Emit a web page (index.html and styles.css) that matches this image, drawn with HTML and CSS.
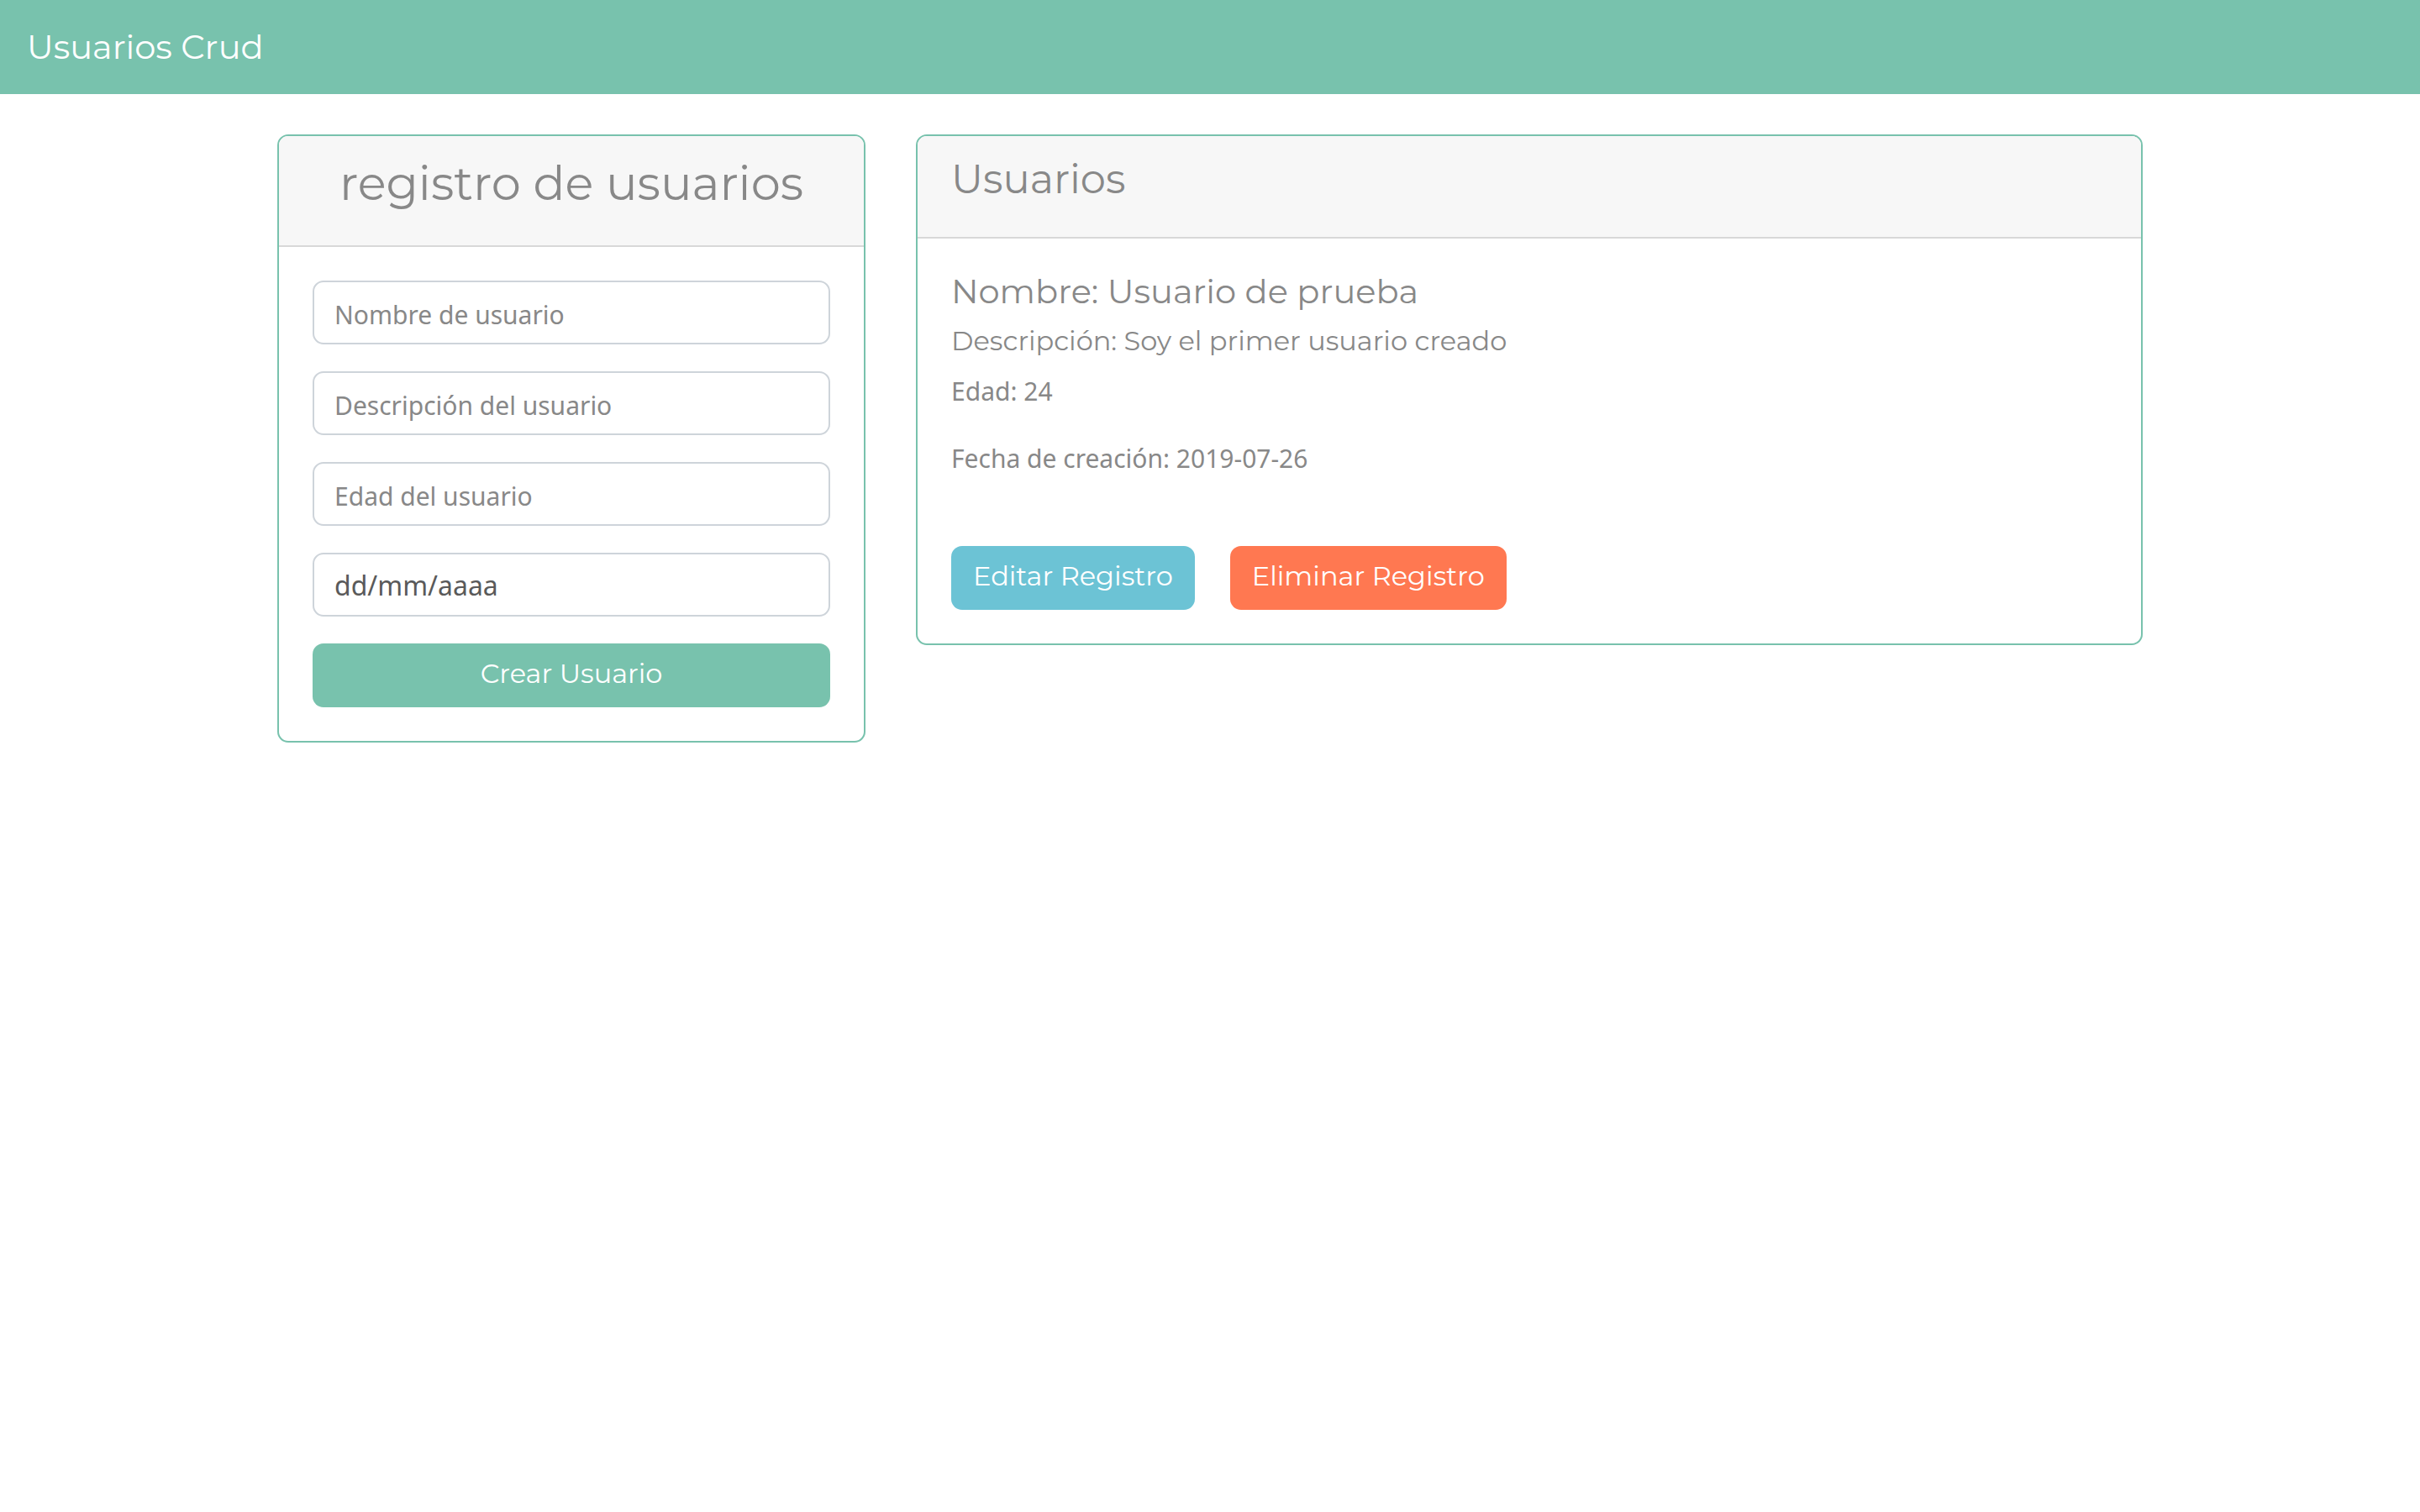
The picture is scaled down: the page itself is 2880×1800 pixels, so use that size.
FILE: index.html
```html
<!DOCTYPE html>
<html lang="es">
<head>
  <meta charset="utf-8">
  <meta name="viewport" content="width=device-width, initial-scale=1">
  <title>Usuarios Crud</title>
  <link rel="stylesheet" href="styles.css">
</head>
<body>
  <nav class="navbar">
    <a class="navbar-brand" href="#">Usuarios Crud</a>
  </nav>

  <main class="container">
    <section class="column">
      <div class="card">
        <header class="card-header card-header-center">
          <h1 class="card-title-large">registro de usuarios</h1>
        </header>
        <form class="card-body user-form">
          <input class="form-control" type="text" name="nombre" placeholder="Nombre de usuario" aria-label="Nombre de usuario">
          <input class="form-control" type="text" name="descripcion" placeholder="Descripción del usuario" aria-label="Descripción del usuario">
          <input class="form-control" type="text" name="edad" inputmode="numeric" placeholder="Edad del usuario" aria-label="Edad del usuario">
          <input class="form-control form-control-date" type="text" name="fecha" placeholder="dd/mm/aaaa" aria-label="Fecha de creación">
          <button class="btn btn-primary" type="submit">Crear Usuario</button>
        </form>
      </div>
    </section>

    <section class="column">
      <div class="card">
        <header class="card-header">
          <h2 class="card-title">Usuarios</h2>
        </header>
        <article class="card-body">
          <h3 class="user-name">Nombre: Usuario de prueba</h3>
          <h4 class="user-description">Descripción: Soy el primer usuario creado</h4>
          <p class="user-detail">Edad: 24</p>
          <p class="user-detail">Fecha de creación: 2019-07-26</p>
          <div class="user-actions">
            <button class="btn btn-info" type="button">Editar Registro</button>
            <button class="btn btn-danger" type="button">Eliminar Registro</button>
          </div>
        </article>
      </div>
    </section>
  </main>
</body>
</html>
```
FILE: styles.css
```css
:root {
  --primary: #78c2ad;
  --info: #6cc3d5;
  --danger: #ff7851;
  --text: #888;
  --heading-font: Montserrat, Inter, sans-serif;
  --body-font: "Segoe UI", "Noto Sans", sans-serif;
}

* {
  box-sizing: border-box;
}

body {
  margin: 0;
  background: #fff;
  color: var(--text);
  font-family: var(--body-font);
  font-size: 30px;
  line-height: 48px;
}

h1,
h2,
h3,
h4,
p {
  margin: 0;
}

h1,
h2,
h3,
h4 {
  font-family: var(--heading-font);
  font-weight: 400;
}

/* Top bar */
.navbar {
  display: flex;
  align-items: center;
  padding: 26px 32px;
  background: var(--primary);
}

.navbar-brand {
  color: #fff;
  font-family: var(--heading-font);
  font-size: 40px;
  line-height: 60px;
  text-decoration: none;
}

/* Page grid */
.container {
  display: grid;
  grid-template-columns: minmax(0, 1fr) minmax(0, 2fr);
  align-items: start;
  max-width: 2280px;
  margin: 48px auto;
}

.column {
  padding: 0 30px;
}

/* Cards */
.card {
  overflow: hidden;
  border: 2px solid var(--primary);
  border-radius: 13px;
}

.card-header {
  padding: 24px 40px 42px;
  border-bottom: 2px solid #d8d8d8;
  background: #f7f7f7;
}

.card-header-center {
  text-align: center;
}

.card-title-large {
  font-size: 56px;
  line-height: 64px;
}

.card-title {
  font-size: 48px;
  line-height: 54px;
}

.card-body {
  padding: 40px;
}

/* Form */
.user-form {
  display: grid;
  gap: 32px;
}

.form-control {
  width: 100%;
  height: 76px;
  padding: 4px 24px 0;
  border: 2px solid #ced4da;
  border-radius: 13px;
  background: #fff;
  color: #5a5a5a;
  font: inherit;
}

.form-control::placeholder {
  color: var(--text);
  opacity: 1;
}

.form-control-date {
  padding-top: 0;
  font-size: 32px;
}

.form-control-date::placeholder {
  color: #5a5a5a;
}

/* Buttons */
.btn {
  padding: 12px 26px 16px;
  border: 0;
  border-radius: 13px;
  color: #fff;
  font-family: var(--heading-font);
  font-size: 32px;
  line-height: 48px;
  cursor: pointer;
}

.btn-primary {
  background: var(--primary);
}

.btn-info {
  background: var(--info);
}

.btn-danger {
  background: var(--danger);
}

/* User record */
.user-name {
  margin-bottom: 16px;
  font-size: 40px;
  line-height: 46px;
}

.user-description {
  margin-bottom: 16px;
  font-size: 32px;
  line-height: 40px;
}

.user-detail {
  margin-bottom: 32px;
}

.user-actions {
  display: flex;
  flex-wrap: wrap;
  gap: 42px;
  padding-top: 48px;
}
```
